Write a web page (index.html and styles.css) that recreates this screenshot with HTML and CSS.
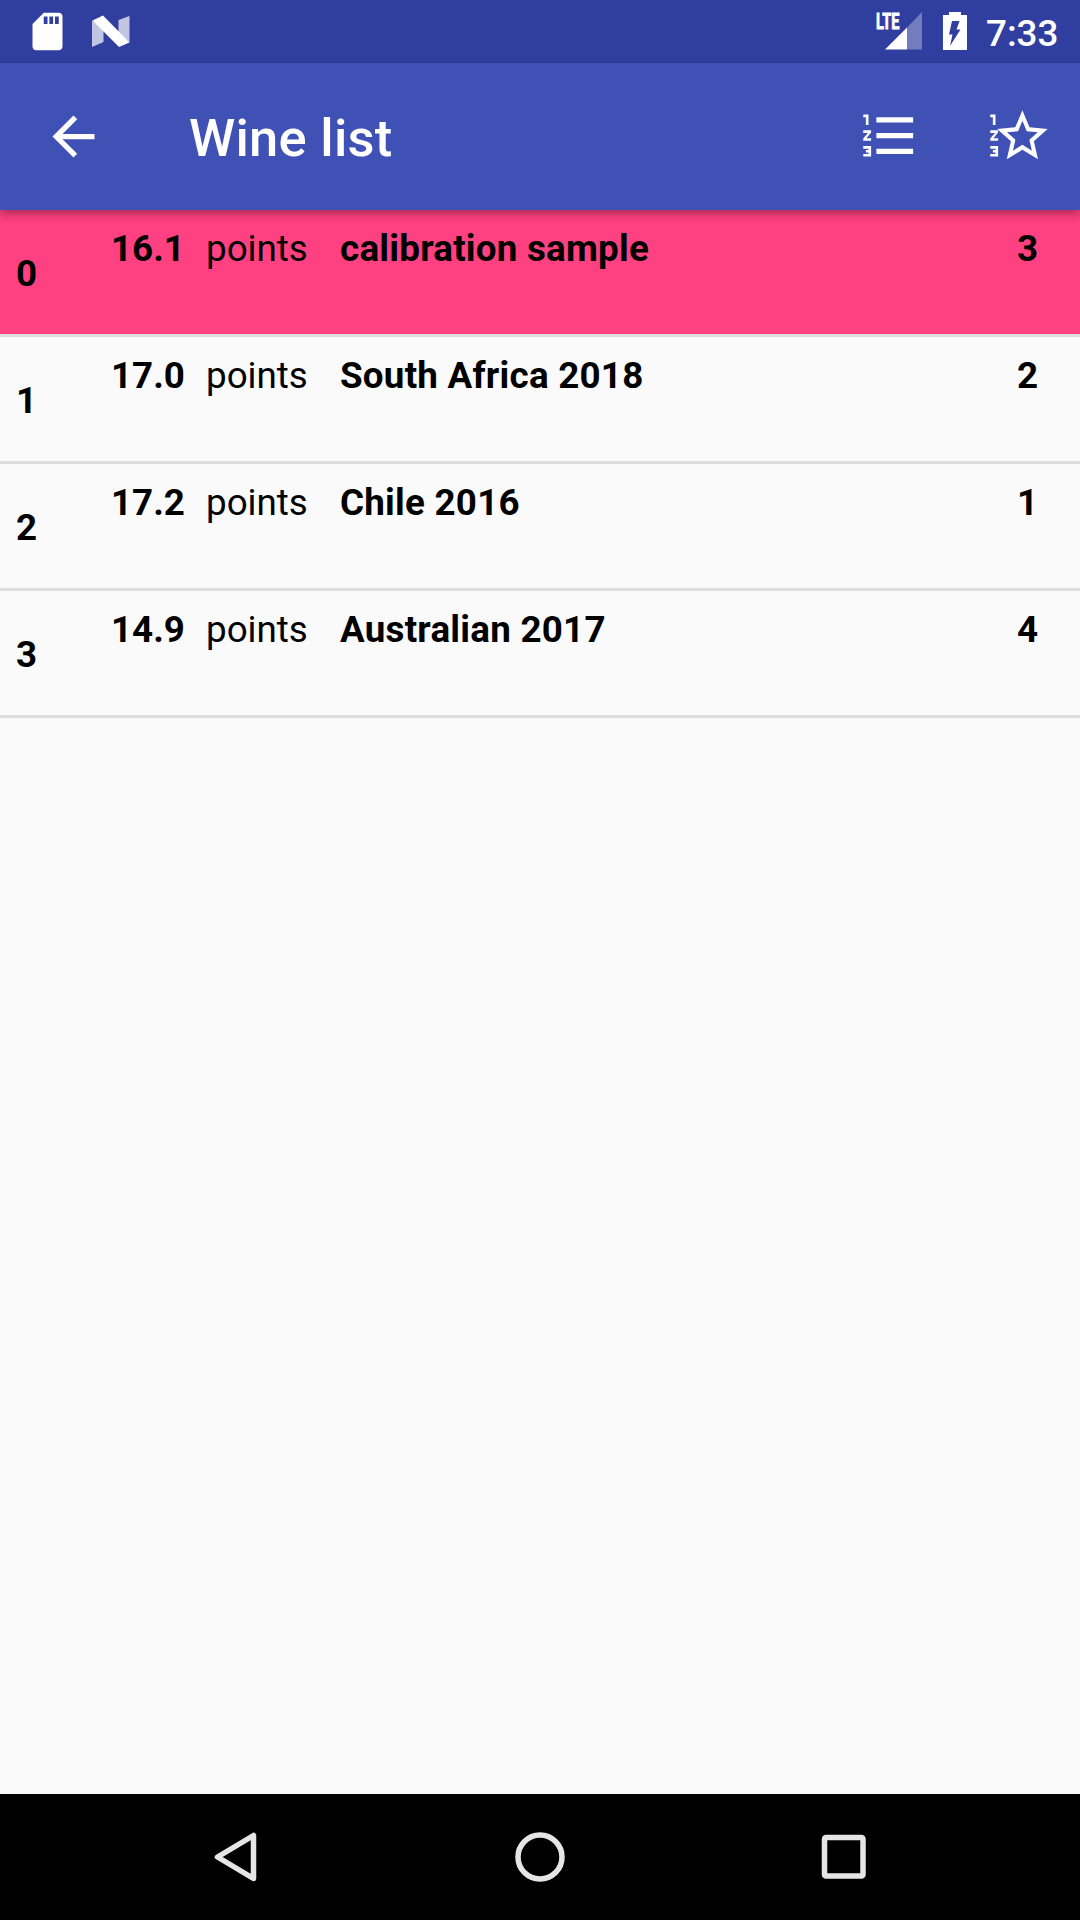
FILE: index.html
```html
<!DOCTYPE html>
<html lang="en">
<head>
<meta charset="utf-8">
<title>Wine list</title>
<link rel="stylesheet" href="styles.css">
</head>
<body>
<div class="screen">
  <div class="status-bar">
    <svg class="sd-card" viewBox="0 0 24 24"><path d="M18 2h-8L4.020 8 4 20c0 1.100.9 2 2 2h12c1.100 0 2-.9 2-2V4c0-1.100-.9-2-2-2zm-6 6h-2V4h2v4zm3 0h-2V4h2v4zm3 0h-2V4h2v4z"/></svg>
    <svg class="nougat" viewBox="0 0 38 32"><path class="faint" d="M0 5.500L11.500 13V27L0 32zM26.500 5L37.500 1V27.500L26.500 18z"/><path d="M0.500 5.500L11 .5 37.500 27.500 27 32z"/></svg>
    <div class="spacer"></div>
    <svg class="signal" viewBox="0 0 47 38"><path class="faint-signal" d="M31 15.500L46 0V37.500H31z"/><path d="M9 37.500L31 15.500V37.500z"/><text class="lte" x="0" y="17" textLength="23.500" lengthAdjust="spacingAndGlyphs">LTE</text></svg>
    <svg class="battery" viewBox="0 0 24 38"><path fill-rule="evenodd" d="M6 0H18V3H24V38H0V3H6zM9 9L6 22.500H9.500L7 34 17.500 17.500H13.500L16.500 9z"/></svg>
    <span class="clock">7:33</span>
  </div>

  <header class="toolbar">
    <svg class="icon back" viewBox="0 0 24 24"><path d="M20 11H7.830l5.590-5.590L12 4l-8 8 8 8 1.410-1.410L7.830 13H20v-2z"/></svg>
    <h1 class="title">Wine list</h1>
    <svg class="icon" viewBox="0 0 24 24"><path d="M2 17h2v.5H3v1h1v.5H2v1h3v-4H2v1zm1-9h1V4H2v1h1v3zm-1 3h1.800L2 13.100v.9h3v-1H3.200L5 10.900V10H2v1zm5-6v2h14V5H7zm0 14h14v-2H7v2zm0-6h14v-2H7v2z"/></svg>
    <svg class="icon rank-icon" viewBox="0 0 24 24"><path d="M2 17h2v.5H3v1h1v.5H2v1h3v-4H2v1zm1-9h1V4H2v1h1v3zm-1 3h1.800L2 13.100v.9h3v-1H3.200L5 10.900V10H2v1z"/><path transform="translate(2.700 .4) scale(.962 .985)" d="M22 9.240l-7.190-.62L12 2 9.190 8.630 2 9.240l5.460 4.730L5.820 21 12 17.270 18.180 21l-1.630-7.030L22 9.240zM12 15.400l-3.760 2.270 1-4.280-3.320-2.880 4.380-.38L12 6.100l1.710 4.040 4.380.38-3.320 2.880 1 4.280L12 15.400z"/></svg>
  </header>

  <main class="list">
    <div class="row selected"><b class="index">0</b><b class="score">16.1</b><span class="unit">points</span><b class="name">calibration sample</b><b class="rank">3</b></div>
    <div class="row"><b class="index">1</b><b class="score">17.0</b><span class="unit">points</span><b class="name">South Africa 2018</b><b class="rank">2</b></div>
    <div class="row"><b class="index">2</b><b class="score">17.2</b><span class="unit">points</span><b class="name">Chile 2016</b><b class="rank">1</b></div>
    <div class="row"><b class="index">3</b><b class="score">14.9</b><span class="unit">points</span><b class="name">Australian 2017</b><b class="rank">4</b></div>
  </main>

  <nav class="nav-bar">
    <svg class="nav-icon" viewBox="0 0 50 50"><path d="M42.500 3.500V46.500L6.500 25z"/></svg>
    <svg class="nav-icon" viewBox="0 0 50 50"><circle cx="25" cy="25" r="22"/></svg>
    <svg class="nav-icon" viewBox="0 0 50 50"><rect x="5.500" y="5.500" width="38.500" height="38.500" rx="1.500"/></svg>
  </nav>
</div>
</body>
</html>
```
FILE: styles.css
```css
* { box-sizing: border-box; }
body {
  margin: 0;
  font-family: Roboto, "Liberation Sans", sans-serif;
  color: #000;
}
svg { display: block; flex: none; fill: #fff; overflow: visible; }

.screen {
  width: 1080px;
  height: 1920px;
  display: flex;
  flex-direction: column;
  background: #fafafa;
  overflow: hidden;
}

.status-bar {
  height: 63px;
  flex: none;
  display: flex;
  align-items: flex-start;
  padding: 0 21px 0 25px;
  background: #303f9f;
}
.sd-card { width: 45px; height: 45px; margin-top: 9px; }
.nougat { width: 38px; height: 32px; margin: 15px 0 0 21.5px; }
.faint { opacity: .7; }
.faint-signal { opacity: .32; }
.spacer { flex: 1; }
.signal { width: 47px; height: 38px; margin: 12px 20px 0 0; }
.lte { font-size: 22px; font-weight: 700; stroke: #fff; stroke-width: .8px; }
.battery { width: 24px; height: 38px; margin: 12px 19px 0 0; }
.clock {
  width: 73px;
  margin-top: 12px;
  font-size: 36.75px;
  line-height: 43px;
  font-weight: 500;
  color: #fff;
  white-space: nowrap;
}

.toolbar {
  position: relative;
  z-index: 1;
  height: 147px;
  flex: none;
  display: flex;
  align-items: flex-start;
  padding: 41px 32px 0 42px;
  background: #3f51b5;
  box-shadow: 0 4px 9px rgba(0, 0, 0, .32);
}
.icon { width: 63px; height: 63px; }
.back { margin-top: 1px; }
.title {
  flex: 1;
  margin: 3px 0 0 84px;
  font-size: 52.5px;
  line-height: 62px;
  font-weight: 500;
  letter-spacing: .25px;
  color: #fff;
}
.rank-icon { margin-left: 64px; }

.list { flex: 1; }
.row {
  height: 127px;
  display: grid;
  grid-template-columns: 95px 95px 134px 1fr 63px;
  align-items: start;
  padding: 17px 0 0 16px;
  border-bottom: 3px solid #ddd;
  font-size: 36.75px;
  line-height: 43px;
  white-space: nowrap;
}
.selected { background: #ff4081; }
.index { margin-top: 25px; }
.name { letter-spacing: .24px; }

.nav-bar {
  height: 126px;
  flex: none;
  display: flex;
  justify-content: center;
  align-items: center;
  gap: 254px;
  background: #000;
}
.nav-icon {
  width: 50px;
  height: 50px;
  fill: none;
  stroke: #e6e6e6;
  stroke-width: 5.5;
  stroke-linejoin: round;
}
```
